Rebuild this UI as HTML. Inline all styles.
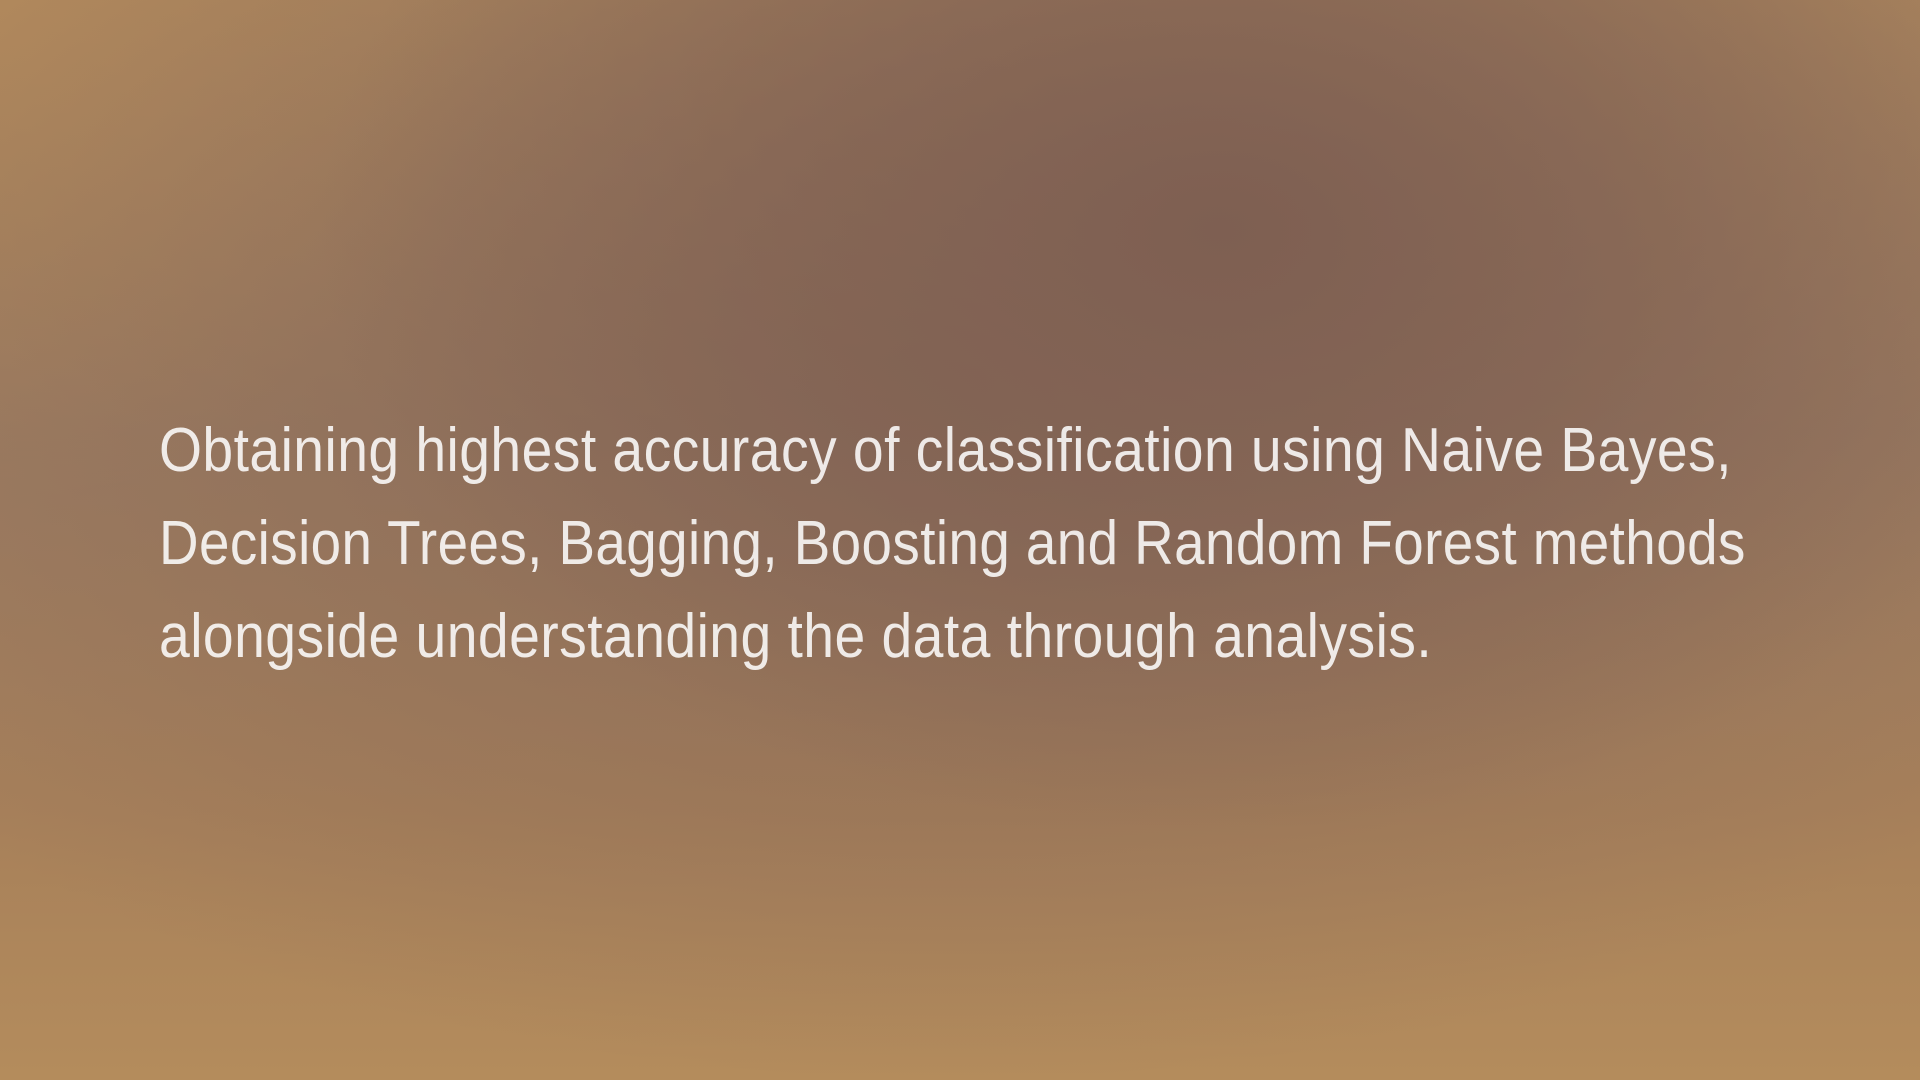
<!DOCTYPE html>
<html><head><meta charset="utf-8"><style>
html,body{margin:0;padding:0;width:1920px;height:1080px;overflow:hidden}
body{background:
radial-gradient(ellipse 900px 600px at 1220px 230px, rgba(126,95,82,1) 0%, rgba(126,95,82,0.6) 45%, rgba(126,95,82,0) 100%),
radial-gradient(ellipse 1300px 700px at 950px 380px, rgba(135,104,86,0.9) 0%, rgba(135,104,86,0) 100%),
radial-gradient(ellipse 500px 500px at 0px 0px, rgba(182,140,92,0.8) 0%, rgba(182,140,92,0) 100%),
linear-gradient(180deg,#ad875e 0%,#9c7c62 40%,#a7805a 75%,#b48c5c 100%);
font-family:"Liberation Sans",sans-serif;position:relative}
.l{position:absolute;left:159px;font-size:62.5px;line-height:93px;height:93px;color:rgba(255,255,255,0.86);font-weight:300;white-space:nowrap;transform-origin:0 0;letter-spacing:0.5px}
</style></head><body>
<div class="l" id="a" style="top:404px">Obtaining highest accuracy of classification using Naive Bayes,</div>
<div class="l" id="b" style="top:497px">Decision Trees, Bagging, Boosting and Random Forest methods</div>
<div class="l" id="c" style="top:590px">alongside understanding the data through analysis.</div>
<script>
var w={a:1573,b:1587,c:1273};
for(var k in w){var e=document.getElementById(k);e.style.transform='scaleX('+(w[k]/e.offsetWidth)+')';}
</script>
</body></html>
